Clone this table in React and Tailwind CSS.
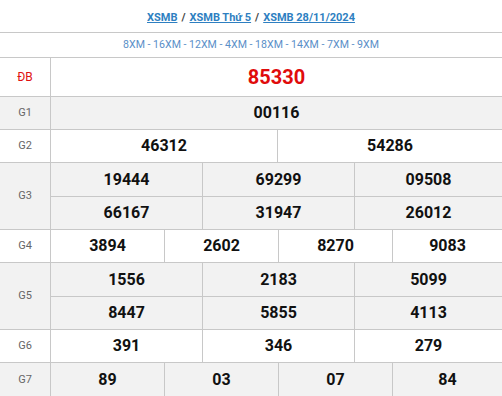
export default function App() {
  const font = { fontFamily: "Roboto, 'Liberation Sans', sans-serif" };
  const num = "text-[16px] font-bold text-[#111]";
  const label = "w-[51px] shrink-0 border-r border-[#c8c8c8] flex items-center justify-center text-[11px] text-[#666]";
  const row = "flex border-b border-[#c8c8c8]";
  const cell = "flex items-center justify-center";
  return (
    <div className="w-[502px] h-[396px] overflow-hidden bg-white" style={font}>
      <div className="h-[33px] border-b border-[#c8c8c8] flex items-center justify-center pt-[4px] text-[11px] font-bold">
        <a className="text-[#2e7fc1] underline">XSMB</a>
        <span className="text-[#444] mx-[4px]">/</span>
        <a className="text-[#2e7fc1] underline">XSMB Thứ 5</a>
        <span className="text-[#444] mx-[4px]">/</span>
        <a className="text-[#2e7fc1] underline">XSMB 28/11/2024</a>
      </div>
      <div className="h-[25px] border-b border-[#c8c8c8] flex items-center justify-center text-[10.6px] text-[#5a8fc8]">
        8XM - 16XM - 12XM - 4XM - 18XM - 14XM - 7XM - 9XM
      </div>
      {/* DB */}
      <div className={row + " h-[39px] bg-white"}>
        <div className={label + " !text-[#e01010] text-[12px]"}>ĐB</div>
        <div className={cell + " flex-1 text-[20px] font-bold text-[#e00b0b]"}>85330</div>
      </div>
      {/* G1 */}
      <div className={row + " h-[33px] bg-[#f2f2f2]"}>
        <div className={label}>G1</div>
        <div className={cell + " flex-1 " + num}>00116</div>
      </div>
      {/* G2 */}
      <div className={row + " h-[33px] bg-white"}>
        <div className={label}>G2</div>
        <div className={cell + " w-[227px] border-r border-[#c8c8c8] " + num}>46312</div>
        <div className={cell + " flex-1 " + num}>54286</div>
      </div>
      {/* G3 */}
      <div className={row + " h-[67px] bg-[#f2f2f2]"}>
        <div className={label}>G3</div>
        <div className="flex-1 flex flex-col">
          <div className="flex h-[34px] border-b border-[#c8c8c8]">
            <div className={cell + " w-[152px] border-r border-[#c8c8c8] " + num}>19444</div>
            <div className={cell + " w-[152px] border-r border-[#c8c8c8] " + num}>69299</div>
            <div className={cell + " flex-1 " + num}>09508</div>
          </div>
          <div className="flex flex-1">
            <div className={cell + " w-[152px] border-r border-[#c8c8c8] " + num}>66167</div>
            <div className={cell + " w-[152px] border-r border-[#c8c8c8] " + num}>31947</div>
            <div className={cell + " flex-1 " + num}>26012</div>
          </div>
        </div>
      </div>
      {/* G4 */}
      <div className={row + " h-[33px] bg-white"}>
        <div className={label}>G4</div>
        <div className={cell + " w-[114px] border-r border-[#c8c8c8] " + num}>3894</div>
        <div className={cell + " w-[114px] border-r border-[#c8c8c8] " + num}>2602</div>
        <div className={cell + " w-[114px] border-r border-[#c8c8c8] " + num}>8270</div>
        <div className={cell + " flex-1 " + num}>9083</div>
      </div>
      {/* G5 */}
      <div className={row + " h-[67px] bg-[#f2f2f2]"}>
        <div className={label}>G5</div>
        <div className="flex-1 flex flex-col">
          <div className="flex h-[34px] border-b border-[#c8c8c8]">
            <div className={cell + " w-[152px] border-r border-[#c8c8c8] " + num}>1556</div>
            <div className={cell + " w-[152px] border-r border-[#c8c8c8] " + num}>2183</div>
            <div className={cell + " flex-1 " + num}>5099</div>
          </div>
          <div className="flex flex-1">
            <div className={cell + " w-[152px] border-r border-[#c8c8c8] " + num}>8447</div>
            <div className={cell + " w-[152px] border-r border-[#c8c8c8] " + num}>5855</div>
            <div className={cell + " flex-1 " + num}>4113</div>
          </div>
        </div>
      </div>
      {/* G6 */}
      <div className={row + " h-[33px] bg-white"}>
        <div className={label}>G6</div>
        <div className={cell + " w-[152px] border-r border-[#c8c8c8] " + num}>391</div>
        <div className={cell + " w-[152px] border-r border-[#c8c8c8] " + num}>346</div>
        <div className={cell + " flex-1 " + num}>279</div>
      </div>
      {/* G7 */}
      <div className="flex h-[34px] bg-[#f2f2f2]">
        <div className={label}>G7</div>
        <div className={cell + " w-[114px] border-r border-[#c8c8c8] " + num}>89</div>
        <div className={cell + " w-[114px] border-r border-[#c8c8c8] " + num}>03</div>
        <div className={cell + " w-[114px] border-r border-[#c8c8c8] " + num}>07</div>
        <div className={cell + " flex-1 " + num}>84</div>
      </div>
    </div>
  );
}
